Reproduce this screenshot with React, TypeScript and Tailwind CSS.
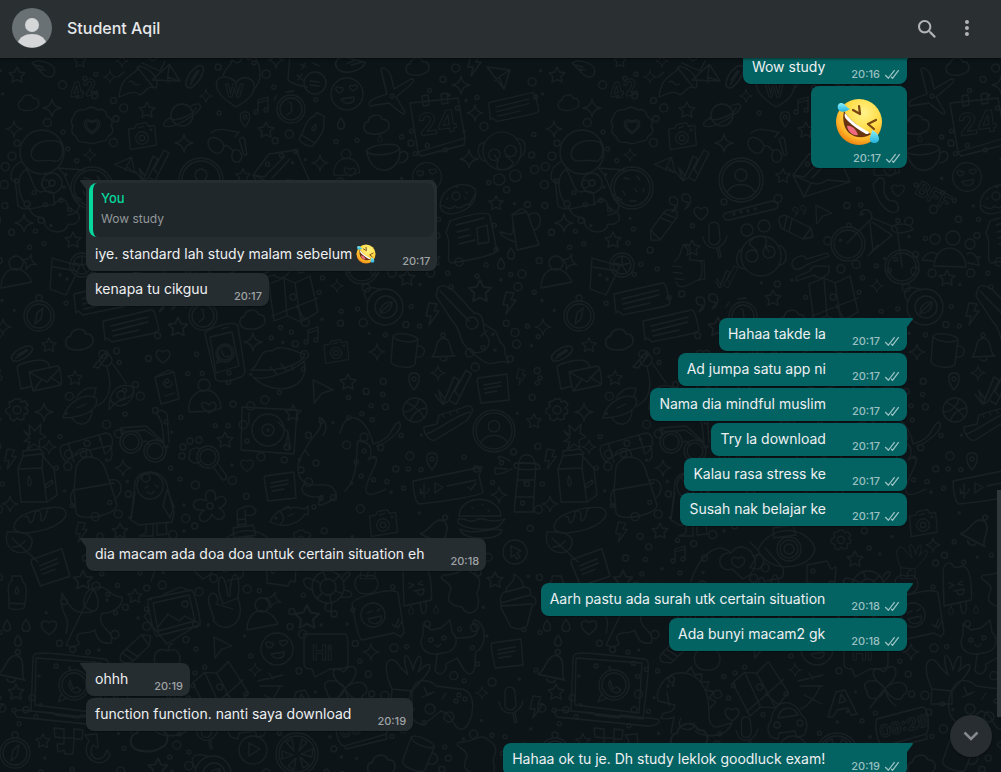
import { ReactNode } from "react";

type Message = {
  text?: string;
  time: string;
  emoji?: boolean;
  quote?: { author: string; text: string };
};

type Group = {
  mine: boolean;
  messages: Message[];
};

const groups: Group[] = [
  {
    mine: true,
    messages: [
      { text: "Wow study", time: "20:16" },
      { emoji: true, time: "20:17" },
    ],
  },
  {
    mine: false,
    messages: [
      {
        text: "iye. standard lah study malam sebelum",
        emoji: true,
        time: "20:17",
        quote: { author: "You", text: "Wow study" },
      },
      { text: "kenapa tu cikguu", time: "20:17" },
    ],
  },
  {
    mine: true,
    messages: [
      { text: "Hahaa takde la", time: "20:17" },
      { text: "Ad jumpa satu app ni", time: "20:17" },
      { text: "Nama dia mindful muslim", time: "20:17" },
      { text: "Try la download", time: "20:17" },
      { text: "Kalau rasa stress ke", time: "20:17" },
      { text: "Susah nak belajar ke", time: "20:17" },
    ],
  },
  {
    mine: false,
    messages: [{ text: "dia macam ada doa doa untuk certain situation eh", time: "20:18" }],
  },
  {
    mine: true,
    messages: [
      { text: "Aarh pastu ada surah utk certain situation", time: "20:18" },
      { text: "Ada bunyi macam2 gk", time: "20:18" },
    ],
  },
  {
    mine: false,
    messages: [
      { text: "ohhh", time: "20:19" },
      { text: "function function. nanti saya download", time: "20:19" },
    ],
  },
  {
    mine: true,
    messages: [{ text: "Hahaa ok tu je. Dh study leklok goodluck exam!", time: "20:19" }],
  },
];

// circle as a sub-path, so a doodle stays a single path string
const c = (x: number, y: number, r: number) =>
  `M${x - r} ${y}a${r} ${r} 0 1 0 ${r * 2} 0a${r} ${r} 0 1 0 ${-r * 2} 0`;

// doodle outlines, drawn around 0,0
const shapes: Record<string, string> = {
  star: "M0-8 2.4-3 8-2.2 4 1.6 5 7.2 0 4.6-5 7.2-4 1.6-8-2.2-2.4-3Z",
  sparkle: "M0-9Q1-1 9 0 1 1 0 9-1 1-9 0-1-1 0-9Z",
  heart: "M0 7C-12-1-6-9 0-4 6-9 12-1 0 7Z",
  cloud: "M-9 7C-14 4-12-3-8-3-7-10 3-11 5-5 12-6 13 4 7 6 3 9-5 9-9 7Z",
  pin: "M0 9C-8-1-6-8 0-8S8-1 0 9Z" + c(0, -2, 2),
  drop: "M0-6C6 2 3 5 0 5S-6 2 0-6Z",
  bolt: "M-3-11 5-10 2-3 7-3-3 11-1 2-6 2Z",
  capsule: "M-11-5C-5-10 8-5 11 0 14 9 6 11 1 7ZM-8-3 0-1M-5 1 2 2",
  clip: "M-9 5C-13 0 5-11 9-6S-7 11-9 5ZM-6 4 5-3M-4 1 4-4",
  cone: "M-11-10 12-7 6 12ZM6 12 1 0 12-7M1 0-3 4",
  cursor: "M-8-11 10-2 0 1-7 10Z",
  cursorCircle: c(0, 0, 12) + "M-4-6 6-1 2 1 5 5 2 7-1 3-4 5Z",
  music: "M-4 6V-6L6-9V3M-4-3 6-6" + c(-6, 6, 2) + c(4, 4, 2),
  unicorn: "M-19 17C-17-2-8-4-3-8L2-14C17-9 21 1 18 8 8 5 10 11 2 15-5 9-12 15-19 17ZM-1-13 16 8M-9 2C-4-2-5 8 1 4M4-17 22-9 27-19M-20-3-14-8",
  fireHeart: "M0 22C-26 6-22-8-12-8-6-8-2-5 0-2 4-9 14-9 18-2 21 9 8 18 0 22ZM-13-9C-12-17-6-16-4-25 1-21 4-20 7-30 12-25 14-22 17-31 27-17 26-3 17 5",
  saturn: c(0, 0, 11) + "M-11 2C-27 12-15 15 0 7S22-8 17-11C14-12 9-9 8-8M-12 4C-5 7 13-1 14-7",
  badge: "M-17-13C-12-19-7-15-6-17-1-21 5-17 6-16 12-18 15-13 15-10 21-7 21-2 19 0 24 6 17 10 16 10 15 17 8 15 6 16 0 20-5 16-7 16-14 18-16 11-16 10-22 8-20 2-19 0-23-5-19-8-17-13Z",
  camera: "M-15-10-8-11-6-15 5-17 7-13 14-14 16 8-13 13Z" + c(0, 0, 7) + c(0, 0, 3) + "M-4-11 2-13" + c(10, -9, 1),
  sunglasses: "M-21 0C-18-10-6-1-5 4-8 18-22 9-21 0ZM-5 4C0 2 2 7 4 9 8 4 17 13 10 20 0 21 3 11 4 9M-18-9C-9-17 4-9 10-10L6-5M10-2C18-11 15 4 18 12 13 16 15 8 10-2",
  watch: c(0, 0, 14) + c(0, 0, 11) + "M-2-7 0-6 1 2-4 6M-5-17 3-18M-14-14-17-9",
  calculator: "M-20-17-22 7C-21 12-8 14-3 15M-18-18 5-15M-10-8-4-5M-5-9-8-3M3-9 9-6M-13 3-7 8M-8 2-12 8" + c(5, 11, 11) + "M0 9 9 10M0 13 9 14",
  bottle: "M-5-15 4-15 6-9C12-5 8 13 7 17-1 20-6 18-8 17-7 3-12-4-5-11ZM-8 12 7 13M0-4C6 5-6 5 0-4",
  smiley: c(0, 0, 16) + "M-8-1C-15-6-9-9-7-6-3-8-2-3-8-1ZM6-3C0-7 3-10 6-8 10-11 13-6 6-3ZM-6 5 7 3C8 10-2 12-6 5Z",
  plane: "M-3 1-9-23C-8-27-3-25 1-17L4-4 21-14C28-14 22-9 6 4L15 19C15 23 12 21-1 10L-20 13C-24 8-15 5-3 1Z" + c(2, 3, 2),
  calendar: "M-26-19 22-24 29 16-18 30ZM-18 30-15 34 28 23 29 16M-14-26-8-27-7-17-13-16ZM5-28 11-29 12-19 6-18Z",
  chat: "M-26-6 22-17C25-18 26-15 30 3 29 7 10 9-17 15L-22 11-24 13ZM-18-1 19-10M-17 4 19-5M-16 9 10 3",
  smallChat: "M-15-10 14-14 16 12-12 15-16-7ZM-9-3 8-6M-9 1 8-2M-8 5 4 3",
  cup: "M-16-4C-15-10 12-14 14-7 18 12-9 25-16-4ZM-16-4C-10 1 11-1 14-7M15-3C24-8 24 7 14 6",
  person: c(0, -11, 7) + "M-15 14C-15-9 7-12 16 8Z",
  lover: c(0, -15, 6) + "M-15 11C-18-12 15-20 17 8L7 11-14 12ZM5 13C-8 4-1-1 5 5 10-2 18 7 5 13Z",
  monkey: c(0, 0, 20) + c(-8, 4, 6) + c(9, 0, 6) + c(-3, 30, 6) + c(14, 26, 6) + "M-19-9C-30-7-24 13-17 10M16-13C29-12 24 6 19 7M-8 4-4 10C-11 23 9 22 12 12L4 5",
  donut: "M-18 7C-16-13 8-18 17-9 23 13-17 25-18 7ZM-18 7C-8 10-9 13-3 8 3 14 8 3 11 7L18-5" + c(-2, -2, 4) + "M-11 1-10 0M8-6 9-5M-2-11 0-11M7 1 8 0",
  newspaper: "M-20-17C-8-21 17-29 20-22L27 13C20 20-10 23-18 25-26 25-17 4-24-5L-20-17M-14-13 14-20M-13-6-1-9M-12 0 0-3M-11 6 5 2M7-10 17-13 19 4 8 6Z",
  teapot: "M-13-17 2-20 14 13-8 18ZM-13-17C-9-22-6-20-5-23-2-24 0-21 2-20M4-17C18-26 18-3 9-2M-12-8C-10 9-18 0-25 0-22 7-14 8-10 10",
  astronaut: c(0, 0, 22) + "M-11 2C-10-9 3-14 18-10 24-1 18 12 13 9 1 6-9 14-11 2M-20 9C-37 17-30 35-27 27L-24 54C-15 62 2 51 12 53 12 42 14 37-2 40-10 37-9 26-16 17-28 26-22 44-18 50M-14 54C-8 70 1 62 3 69 0 79 23 86 26 72 36 75 46 62 26 56M26 56C25 42 15 48 12 53M16 16C26 24 25 34 32 45 42 55 35 62 26 63M16 16 42 18" + c(10, 31, 10) + c(10, 31, 3),
  cookie: c(0, 0, 21) + c(0, 0, 18) + "M-8-10-3-9M5-12 8-8M-9 3-7 7M3 1 5 4M-2 13 4 13M11 4 12 1M-18 7-10 12",
  avatar: c(0, 0, 22) + c(0, 0, 19) + c(0, -5, 6) + "M-14 12C-8 2 8 2 14 12",
  envelope: "M-28-13-12-34 15-38 29-6-17 9ZM-28-13-10-5-17 9M29-6 6-8C0-3-5-4-10-5M-17-11 4-32M-9-10 9-29M-17-11-28-13",
  letters: "M-13 6-24 9-28-13C-27-16-3-24 3-17L5-12M-16-8 12-14C16-14 17 3 16 5L-12 11ZM-16-8 2 2 15-12M-11 10-3-1M16 4 5-3",
  checks: "M-19 5-12 14-2-10M2 6-1 2 9-17 14-14 0 14-5 11M-12 14-7 11 3-8-2-11-10 9-16 1Z",
  password: "M-23 2 23-10C30-9 31-3 26-2L-20 9C-27 9-27 3-23 2Z" + c(-15, 3, 1) + c(-8, 1, 1) + c(-1, 0, 1) + c(6, -2, 1),
  quotes: "M-9-6C-1-8-2 6-9 9-4 2-5 2-8 2-14 0-12-6-9-6ZM4-9C12-10 11 4 4 6 9-1 8-1 5-1-1-3 0-9 4-9Z",
  mic: "M-5-14C-4-20 5-19 5-12L6 0C4 7-5 6-5 0ZM-11-3C-8 13 10 11 13-4M3 9 5 18 7 17 5 8",
  thumb: "M-13-6C-5-10-6-20-3-25 8-28 4-9 4-8L14-7C20-6 19 14 12 15L2 20C-6 24-10 21-11 17M14-7 20-7 21 13 13 15M-15-1-5 0M-14 6-4 7M-12 13-3 14",
  phone: "M-7-17C-1-18-1-11-2-7-3-1 1 5 5 6 11 4 15 14 10 17 1 20-11 4-13-11Z",
  bicycle: c(-27, 10, 17) + c(-27, 10, 14) + c(27, 33, 17) + c(27, 33, 14) + "M-28 9-3-16C-3-25-13-28-15-19L-11-20M-5-11-2 17M-3-12 17 1-2 17M-3-16 22-6 27 33M16-6C18-10 35-13 38-4 29-2 21 3 16-6M-7 22 3 11",
  pencil: "M-16-8C-17-14-10-14-8-13L16-1 18 8 8 10-14-1ZM-8-13-11 0M-3-10-6 3M16-1 8 10",
  sliders: "M-18 3C-20-4-5-10-4-3L17-9C21-6 17-5 16-5L-4 3C-11 9-16 9-18 3ZM-14 15 0 9C3 0 13 6 19 4 22 14 9 19 4 13L-14 19Z",
  map: "M-24-14-9-20 2-15 17-22 25 14 8 24-6 18-19 23ZM-9-20-6 18M2-15 8 24M-21 18 25 0M3 7 11 21" + c(0, -1, 3),
  group: c(3, -14, 7) + c(-15, -13, 5) + c(20, -8, 5) + "M-16 14C-14-12 15-8 16 15ZM-13 2C-22-4-28 8-28 8L-17 9M17 2C25-4 29 12 29 13L18 11",
  avocado: c(0, 0, 18) + c(1, 0, 11) + "M-5 6C-5-1 1-6 7-5 7 3 1 7-5 6ZM-5 6 7-5M-17-5C-29-23-8-20-4-17",
  guitar: "M-29-26C-24-32-17-25-14-24L7-1C18-1 16 12 18 20 27 26 21 42 5 38-11 27-4 17-14 8L-31-18ZM-27-23 2 7" + c(5, 9, 6) + "M14 22 20 17M18 10C28 20 26 9 33 28 43 37 33 33 42 49 31 44 26 54 16 47L4 38",
  drink: "M-13-17 15-9 1 20-15 14ZM-12-8 12-4" + c(17, -10, 12) + c(17, -10, 9) + "M17-10 17-19M17-10 25-12M17-10 22-2M17-10 9-12" + c(-5, 0, 1) + c(2, 4, 1),
  compass: c(0, 0, 15) + c(0, 0, 12) + "M4-8 2 3-4 8-2-3Z" + c(0, -18, 3),
  tablet: "M-20-20C-21-25 9-35 13-28L20 18C20 24-3 30-9 26ZM-15-17 7-22 14 12-9 19ZM-3-25 3-27" + c(0, -1, 9) + c(0, -1, 7) + "M-3-4C-3 2 0 4 4 2M-7 4-8 9-3 7" + c(4, 19, 2),
  lips: "M-27 3C-17-3-19-19-6-16 2-24 17-15 27-13 24-3 9 1-6 3ZM-25 10C-15 15 17 3 26-6 33 23-4 31-25 10M-8 0-1 7M3-3 8 3M13-2 15 3",
  scooter: "M-34 25C-31 10-13-1-1 5 2 14-7 24-34 25ZM-21 5C-12-9-3-4-1-5L-3 4M0 13C19 3 12-18 10-26M-4-26 10-42 12-39 1-25ZM16-29 29-10M12 17C12-13 35-10 37-3 35 9 22 2 12 17Z" + c(24, 2, 4) + "M13 5C16 17 34 15 37-1M-25 25C-20 34-6 34-5 18M-20 15-11 11" + c(9, -33, 6),
  gear: c(0, 0, 4) + "M-2-11 3-11 4-8 8-9 11-5 8-2 11 0 10 4 7 4 7 9 3 10 0 8-3 11-7 9-7 5-11 3-11-1-7-3-8-8-4-9Z",
  burst: "M-4-2-5-12 1-6 7-13 6-4 12 0 5 3 6 11 0 7-7 13-4 5-10 4-4 1-10-6Z",
  milk: "M-19-15-14-28 4-30 17-15 20 11 10 18-16 18ZM-14-28-14-33 3-35 7-30M-19-15 5-16 10 18M5-16 6-30M8 1 15-4 16-1 9 4ZM-8-8C-1 4-13 6-8-8",
  backpack: "M-14-15C-9-29 10-28 15-14L27 23C26 34-11 40-14 31L-16 8ZM-16 8 24 1M-17 8C-22 17-18 26-14 24M20-2C31-5 35 8 26 16M-24-20C-12-32 10-34 19-36 22-36 24-24 19-21M-24-20C-30-27-32-35-27-37L15-49C26-49 24-32 15-28M-15-28C-9-36 0-35 2-26M-22-39-16-20M9-47 15-28",
  glasses: c(-13, 7, 11) + c(-13, 7, 8) + c(11, 16, 11) + c(11, 16, 8) + "M-22 0-24-7 2-9 20 7M-1 7C3 4 5 9 6 11M-24-7-18-3 1-5 18 7M25 8 23-21C20-25 15-26 12-22 16-18 19-14 20 12",
  passport: "M-11-10 8-15 13 12-5 17ZM-11-10 3-17 8-15M-3-5C-1 3 7 1 6-5M-1 9 8 6" + c(1, -6, 2),
  magnifier: c(0, 0, 11) + c(0, 0, 8) + "M6 11 13 21C16 25 20 22 18 18L11 8M-8 5C-13 8-22 4-18-3-20-9-11-10-8-8" + c(-26, -1, 3) + c(-25, -10, 3) + c(-18, -16, 3) + c(-9, -17, 3),
  turntable: "M-26-23 29-20 26 24-27 20ZM-19-17-19-6" + c(0, 0, 16) + c(0, 0, 6) + c(0, 0, 1) + "M10-8 20 2 18 16M20 2 22 16" + c(19, 17, 3) + c(-21, 11, 2),
  fish: "M-18 4C-13-9 2-13 17-9L20-12 20-3 17-4C11 6-4 11-18 4ZM-8-6C-2-1-5 4-8 7M-5-9 0-12 3-9M0-2 5-4" + c(-12, 0, 1),
  flower: c(0, 0, 3) + "M-3-5C-10-17 9-21 5-6 14-16 22-2 9 2 22 9 8 20 2 8-3 22-18 14-6 4-21 7-20-12-3-5Z",
  hoodie: "M-22 18-18-20C-13-35 10-33 14-17L21 11 19 20-14 23ZM-18-10-22 18M14-12 21 5 17 16 10 4Z" + c(-3, -16, 13) + "M-8-14-5-16M2-17 5-15M-6-10C-2-7 0-8 1-11M-7 24-7 31-14 34 0 34 0 23M4 23 4 33 14 32 13 21",
  bread: "M-26 7C-25-9 11-14 22-12 34-5 18 10-13 13-21 13-26 12-26 7ZM-15-3C-10-6-12 2-10 3-3 1-8-11-1-9 3-7-1 1 2 1 9-3 4-12 10-12",
  leaf: "M-11-13C9-14 20-8 11 5 1 12-15 5-11-13ZM-6-7 20 17M2 1 7-4M2 1-5 2",
  snorkel: "M-8-14-7 2M0-15 1 2M-8-14C-2-19 8-22 11-14 9-8 4-10 1-10M-12 3 8 0 11 10-11 13ZM-8-5 0-6M-8 0 0-1",
  octopus: "M-2-25C5-34-2-43-6-42 0-29-12-28-20-10-30 4-30 20-16 24-5 27 5 21 10 31 15 38 3 42-3 45-14 47 5 30-6 37-15 38-28 34-21 24M-20-10-16-4M20 31C36 14 30-13 33-19 50-18 47-4 43 0 53-7 54-2 47 12 37 32 38 41 61 29M15-27C23-58 45-36 48-16M48-16C70-22 66-36 74-38 81-31 60-16 52-14" + c(-9, 3, 3) + c(-24, 10, 3),
  mug: "M-13-14C-8-19 9-15 12-11L9 14C7 19-12 18-15 12ZM-13-14C-10-8 8-6 12-11M11-4C21-6 21 9 10 7",
  bell: "M-11 10C-5 4-9-7 0-9 9-8 6 3 11 9ZM-11 10 12 9M-3 12C-1 15 4 14 4 11" + c(0, -12, 2),
  basketball: c(0, 0, 12) + "M-9-8C0-4 7 3 9 8M-11 2C-3 2 3-6 4-11M-5 11C-2 3 5-2 12-2",
  shoe: "M-24-1-11-4-9-13 14-20C26-26 28-18 18-7L-13 12C-18 14-25 5-24-1ZM-22 6C-12 4 7-13 22-16M-6-14-4-11M1-16 3-13M8-18 10-15",
  voice: "M-35-3 34-17 31-8 35 8C35 12-18 19-29 20-33 19-35 4-35-3ZM-24 0-24 7M-28 5C-26 11-20 11-19 5M-24 10-24 14M-13-1-13 9-5 3ZM-1 2 28-4M20 3 23 6 28-1",
  lighthouse: "M-8-14-13 35 6 35 9-14ZM-8-14C-7-25 6-25 8-14M-12-14C-15-9-12-6 13-8 14-14 9-14-12-14M-9 3 7 3M-11 20 6 20M-2 9-3 5 2 5 2 9ZM-15-8C-36 2-32-5-32-9L-20-8M-17-16C-34-26-29-17-24-16",
  burger: "M-21-1C-20-24 20-22 21-1ZM-22 3C-16-2-12 8-4 3 3-2 8 8 25 2L20 8C14 16-25 12-22 3M-20 12C-6 19 10 10 22 13 21 24-17 25-20 12M-8-10-7-9M2-13 3-12M8-7 9-6",
  dog: "M-24 18C-18-2-32 1-28-22M-28-22C-19-6-16 0 2-3M-3-7C-11-10-3-28 3-26 11-15 10 3-3-7ZM3-26C16-34 21-16 32-18 34-5 14 0 12-2 5 13 27 16 21 28 9 30 6 20 5 15-5 21-14 14-13 25-6 31-19 33-24 30Z" + c(17, -15, 1),
  picture: "M-25-12 18-21C22-21 28 12 27 14L-16 25C-20 25-26-11-25-12ZM-20-8 16-16 22 10-15 20ZM-15 16-5 3 6 10 12 5 22 10" + c(12, -7, 3) + "M-23 0-29 5-6 33 21 16M-9-17 8-24 17-20",
  peace: "M-14-8C-22-2-8 17-12 18-3 32 18 25 15 4L13-4C17-33 5-36 5-6L3-6C-1-36-10-26-5-6M-14-8C-10-12-4-1-9 2L8 7M-5-6-2 2 13-4",
  turtle: c(0, 0, 16) + c(0, 0, 8) + "M-8-4-15-8M-2-8-5-16M6-6 12-12M8 4 15 7M2 8 3 16M-6 6-11 12M14-9C20-20 28-15 15-5M-15-7C-29-14-26 2-15 3M16 3C29 5 25 12 13 10M4 16 3 24C-5 26-4 18 0 16",
  video: "M-14-12 6-16 10-8 15-10 14 5 9 4 7 9-14 6Z" + c(-8, -6, 2),
  emojiChat: "M-25-14C-27-20 17-32 21-25L27 14C26 18 24 16 24 19L17 15-15 22C-19 21-24-8-25-14Z" + c(-4, -3, 12) + "M-10-5-5-7M0-7 3-9M-9 1 4-2C7 6-6 9-9 1M15 6 18 9 22 1M19 8 21 10 25 3",
  ice: "M-15-16C-15-29-6-29-5-24-1-20 3-26 7-23 14-19 14 8 13 10L-14 16ZM2 13 4 23C7 25 9 22 8 11M-9-7-4-5-9-2M4-9 0-6 5-5M-4 1 6-1C6 7 0 6-1 1",
  blob: "M-18-18C-3-18 3-28 10-20 22-14 17-6 15 0 21 22 4 24 0 14-19 12-13 2-11-4-11-12-27-14-18-18Z",
  cat: "M-22-15-22-26-14-20-4-22 5-30 7-18C15-10 11 2-2 3-23 8-27-7-22-15ZM10-12C26-12 36-13 31-24 26-27 28-33 34-28 44-17 38-2 31 2 28 13 33 18 26 24 19 24 17 15 12 8M-8 5-10 21C-3 28 2 20 1 14L12 8" + c(-14, -10, 2) + c(-1, -12, 2) + "M-10-5-7-3-4-6",
  hi: "M-22-19 18-19C22-19 22-17 22 10 22 15 19 16 4 16L-11 24-14 16C-22 16-22 13-22 10Z",
  apple: "M0-6C-17-14-18 13-3 13 19 16 14-14 0-6ZM0-6C0-11 3-14 5-13",
  laptop: "M-36-34C-36-42-34-42 35-34 41-33 41-32 34 26L-38 18ZM-33-35 33-30 30 20-34 12ZM-38 18C-55 16-57 17-52 24L38 33C49 33 53 28 48 26L12 22 10 25-14 22-15 20Z" + c(5, -8, 15) + c(5, -8, 12) + "M-7 0-11 9-2 5M1-13C-3-6 6 5 12-3L8-6 4-4Z",
  dinosaur: "M-29 1C-33-12-18-34 5-25 27-13 20 17 23 22 27 32 36 24 45 23 40 37 20 39 8 31M-29 1-12 5C-14 17-24 8-26 18-19 20-15 18-13 17L-16 33M-20-8-18 5M0-28 4-33 8-25 15-26 14-18 22-18 19-10 27-8 22-2 29 2 23 8M-6 18C-14 32 10 33 7 23" + c(-19, -14, 1) + c(-14, -15, 1),
  translate: "M-29-14-4-20M-18-22-14-16M-27-9-4-9M-7-8C-12 2-19 11-26 14M-23 0-5 9M1 22 9-3 18-5 30 19 24 20 21 13 10 15 6 22ZM12 8 19 6 14-1Z",
  clover: "M0 0C-18-12-13-25-1-16 8-30 20-15 0 0M0 0C20-15 27 4 18 7 16 16 4 10 0 0M0 0C-2 13-19 14-18 3-27-8-8-12 0 0 2 10 5 14 11 18M0 0-15 20",
  car: "M-17 2C-14-22 7-21 14-3 22 0 18 16 15 17L9 18 7 12-9 14-10 20-17 18C-22 12-20 6-17 2ZM-10-1C-8-13 5-14 10-4Z" + c(-11, 6, 3) + c(12, 4, 3),
  clock: "M-25-9 20-21C27-21 28 2 24 6L-18 18C-25 17-28-3-25-9ZM-18 18-16 21 25 11 24 6",
  plant: "M-14 26-13 11C-26-16-14-27-5-11L3-3C-6-31 5-25 8-8 14-33 20-18 13-6 28-22 29-10 15 4L7 13 7 26ZM-13 11 7 13",
  gamepad: "M-31-19C-26-28-13-24-9-19L14-16C35-17 28 21 18 24 7 26 10 9-4 6L-22 20C-42 15-37-9-31-19ZM-21-18-18-11-11-13M-23-8-14-11M1-12-3-6" + c(14, -10, 2) + c(20, -6, 2) + c(11, -4, 2) + c(-15, 4, 5) + c(4, 12, 5),
  pixels: "M-14-14-4-13-4-4 6-4 6-13 15-12 14-3 6-3 5 12-3 12-4 8-10 10-11 2-4 2-4-4-13-5Z",
  refresh: "M-9-9C-20 8 5 22 12 5L9 0C5 16-13 8-5-5L0-2-1-16-13-15Z",
  play: c(0, 0, 14) + "M-4-7 7-1-4 6Z",
  citrus: c(0, 0, 21) + c(0, 0, 18) + "M2-3 5-15 10-12ZM4 0 16-5 15 3ZM3 3 12 11 6 14ZM-1 4-3 16-9 12ZM-4 1-15 5-15-3ZM-3-3-11-12-5-15Z",
  cupcake: "M-17 3C-19-4-14-9-12-8-13-17-3-14-4-26 6-20 5-14 6-13 14-13 13-6 12-5 22-1 17 6 14 6L9 26C3 30-3 29-7 27L-17 8ZM-16 6 14 4M-12-8 6-13M-17 3 12-5",
  heartHands: "M-47 23C-42 7-25-21-7-5-23-7-21 16-6 11L5 21C17 16 20 3 15-3M-7-5C1-17 15-8 15-2 31-10 28 19 12 9M0 10C-14 2-2-4 0 1 4-5 13 4 0 10ZM27-10 45 10C48 25 37 19 29 23",
  eye: "M-28 0C-18-24 18-27 29-2 27 20-18 25-28 0ZM-28 0-36-8M-28 4-36 18" + c(3, -1, 12) + c(3, -1, 9) + c(3, -1, 5),
};

type Doodle = [kind: string, x: number, y: number, scale?: number, rotate?: number];

const doodles: Doodle[] = [
  ["star", 17, 75], ["capsule", 43, 68], ["sparkle", 110, 77, 0.7], ["unicorn", 138, 80], ["cone", 167, 78, 1, -50],
  ["clip", 195, 77, 1.2, -25], ["fireHeart", 236, 85], ["calculator", 310, 72], ["cloud", 418, 67], ["bolt", 474, 65],
  ["cone", 498, 77], ["star", 80, 61, 0.8], ["sparkle", 122, 61, 0.7], ["sparkle", 276, 60, 0.9], ["capsule", 351, 64, 1.2, 150],
  ["cloud", 29, 103, 0.9], ["sparkle", 52, 108], ["sparkle", 14, 129, 0.9], ["badge", 92, 126], ["heart", 92, 126, 1.1], ["heart", 92, 126, 0.8],
  ["star", 147, 110], ["saturn", 182, 115], ["sparkle", 206, 96, 0.7], ["camera", 142, 138, 0.9], ["sparkle", 184, 143],
  ["pin", 245, 119, 0.9], ["music", 262, 106], ["watch", 291, 109], ["bottle", 314, 128, 1, 28], ["star", 266, 130],
  ["sunglasses", 229, 142], ["smiley", 347, 94], ["plane", 390, 93], ["sparkle", 461, 85], ["calendar", 436, 122],
  ["sparkle", 475, 113, 0.9], ["chat", 512, 108, 0.9], ["cloud", 377, 125, 1.1], ["cup", 384, 156, 1.1], ["drop", 380, 139, 0.6],
  ["drop", 341, 124], ["lover", 346, 166, 0.8], ["monkey", 502, 151, 0.95], ["sparkle", 469, 159], ["astronaut", 42, 152],
  ["sparkle", 90, 155, 0.7], ["cone", 126, 167, 0.8, -30], ["checks", 155, 167], ["avatar", 201, 180], ["star", 243, 176, 0.9],
  ["envelope", 281, 188], ["sparkle", 320, 163, 0.9], ["cookie", 92, 188], ["heart", 358, 190, 0.9], ["phone", 346, 195],
  ["smiley", 427, 177, 0.9], ["donut", 458, 198], ["star", 496, 203, 0.9], ["quotes", 141, 203], ["heart", 161, 213],
  ["password", 209, 211], ["quotes", 260, 211, 0.6], ["cursor", 283, 215, 0.9], ["sparkle", 24, 223], ["star", 73, 240],
  ["pencil", 122, 224, 1, 100], ["star", 152, 248], ["mic", 174, 240], ["pencil", 255, 229], ["bicycle", 335, 234],
  ["newspaper", 470, 238], ["teapot", 525, 232], ["thumb", 146, 267, 0.9], ["monkey", 221, 256, 1, 180], ["sliders", 270, 262],
  ["group", 410, 252], ["star", 407, 278], ["drop", 501, 264], ["drop", 511, 254], ["person", 16, 274],
  ["drink", 65, 275], ["sparkle", 29, 262, 0.9, 20], ["checks", 188, 278, 0.7], ["star", 233, 298], ["map", 293, 298],
  ["sparkle", 337, 286, 0.7], ["compass", 39, 316], ["quotes", 168, 303], ["chat", 100, 300],
  ["chat", 129, 327], ["star", 178, 327, 1.2], ["watch", 203, 316], ["cloud", 253, 320, 1.1], ["avocado", 385, 307],
  ["bolt", 432, 314], ["guitar", 467, 314], ["star", 480, 291, 1.4], ["bolt", 509, 303],
  ["sparkle", 3, 327, 0.9], ["cloud", 80, 340, 1.2], ["star", 49, 345, 0.9], ["clip", 22, 354, 1.1], ["heart", 163, 356],
  ["tablet", 225, 354], ["sparkle", 253, 342], ["music", 312, 336], ["lips", 278, 367], ["camera", 336, 353, 0.8],
  ["sparkle", 377, 352, 0.9], ["mug", 406, 350], ["bell", 443, 347], ["letters", 45, 380], ["star", 75, 378, 0.9],
  ["scooter", 97, 393], ["passport", 166, 387], ["lover", 204, 400], ["cursor", 322, 392, 1.1], ["star", 348, 382],
  ["pin", 414, 381], ["sparkle", 438, 373, 0.8], ["checks", 456, 389, 1.1], ["smallChat", 493, 388], ["bolt", 521, 377, 0.7],
  ["gear", 17, 410], ["sparkle", 44, 412], ["burst", 34, 437], ["sparkle", 49, 447, 0.8], ["bolt", 10, 459, 0.9],
  ["turntable", 268, 430], ["star", 293, 413], ["star", 225, 440], ["glasses", 144, 435], ["magnifier", 208, 457],
  ["basketball", 415, 410], ["shoe", 448, 428], ["avatar", 494, 431, 0.95], ["star", 534, 421, 0.9], ["octopus", 325, 460],
  ["pin", 432, 461], ["voice", 448, 484], ["lighthouse", 527, 477], ["sparkle", 499, 495, 0.9], ["heart", 247, 465, 0.9],
  ["milk", 37, 484], ["backpack", 90, 482], ["sparkle", 123, 468, 0.9], ["hoodie", 153, 502], ["smallChat", 280, 486],
  ["fish", 288, 518], ["flower", 210, 506], ["sparkle", 10, 504, 0.9], ["bread", 40, 520], ["bolt", 81, 532, 0.9],
  ["star", 120, 531], ["snorkel", 245, 525], ["camera", 383, 525, 0.9], ["burger", 480, 517], ["bell", 438, 530, 1.2, 30],
  ["leaf", 18, 545], ["smallChat", 50, 567, 1.1, -12], ["music", 139, 555], ["star", 83, 580, 1.2], ["heartHands", 198, 558],
  ["cursorCircle", 515, 552], ["eye", 246, 550], ["gear", 301, 540, 0.9], ["star", 315, 559], ["plant", 370, 560, 0.7],
  ["sparkle", 393, 545, 0.8], ["bottle", 17, 591], ["dog", 90, 615], ["star", 135, 596, 0.9], ["picture", 173, 611],
  ["peace", 225, 602], ["person", 262, 616], ["sparkle", 273, 600, 0.9, 15], ["video", 281, 577], ["turtle", 328, 587],
  ["star", 307, 617, 1.5], ["apple", 367, 582, 0.9], ["ice", 418, 590], ["blob", 462, 593], ["star", 495, 580],
  ["cupcake", 518, 600], ["emojiChat", 377, 618], ["drop", 7, 626], ["drop", 26, 626, 1.1], ["drop", 18, 641],
  ["heart", 49, 627, 1.1], ["drop", 411, 611, 0.7], ["drop", 436, 610, 0.7], ["cat", 445, 650], ["smiley", 277, 649],
  ["hi", 326, 653], ["pencil", 137, 650, 1, -70], ["apple", 168, 657], ["cursor", 222, 648], ["sparkle", 371, 652, 0.9],
  ["smallChat", 507, 653], ["bell", 14, 666, 1.2, 15], ["laptop", 69, 693], ["star", 16, 692], ["sparkle", 255, 670, 0.7],
  ["dinosaur", 147, 700], ["map", 220, 688, 1, -20], ["translate", 287, 695], ["clover", 345, 688], ["plant", 405, 678],
  ["gamepad", 445, 705], ["sparkle", 482, 693, 0.7], ["mic", 510, 705], ["bolt", 536, 707], ["heart", 192, 714],
  ["car", 248, 719], ["clock", 362, 728], ["compass", 15, 753], ["star", 43, 741, 0.9], ["pixels", 68, 742],
  ["refresh", 98, 750], ["cloud", 150, 738, 1.6], ["mic", 206, 733, 0.9], ["play", 253, 750], ["citrus", 297, 754],
  ["star", 158, 768, 1.2], ["avocado", 213, 774], ["mug", 420, 754, 1, 15], ["blob", 478, 760], ["cloud", 382, 766, 1.2],
];

const sketchedWords = [
  { word: "42", x: 71, y: 100, size: 22, rotate: -14 },
  { word: "W", x: 225, y: 97, size: 18, rotate: 0 },
  { word: "24", x: 420, y: 136, size: 30, rotate: -8 },
  { word: "BFF", x: 374, y: 193, size: 20, rotate: 28 },
  { word: "Hi", x: 312, y: 660, size: 20, rotate: 0 },
  { word: "09:28", x: 341, y: 738, size: 17, rotate: -14 },
];

// small bubbles that fill the space between the doodles
function scatterDots() {
  const dots: { x: number; y: number; r: number }[] = [];
  let seed = 11;
  const next = () => {
    seed = (seed * 16807) % 2147483647;
    return seed / 2147483647;
  };
  const small = ["star", "sparkle", "heart", "drop", "bolt", "pin", "music"];
  for (let i = 0; i < 3600; i++) {
    const dot = { x: next() * 540, y: 56 + next() * 720, r: [1, 2, 2, 3, 4][Math.floor(next() * 5)] };
    const nearDoodle = doodles.some(([kind, x, y]) => {
      const reach = small.includes(kind) ? 14 : 25;
      return Math.hypot(x - dot.x, y - dot.y) < reach;
    });
    const nearDot = dots.some((d) => Math.hypot(d.x - dot.x, d.y - dot.y) < 11);
    if (!nearDoodle && !nearDot) dots.push(dot);
  }
  return dots;
}

const dots = scatterDots();

function Wallpaper() {
  return (
    <svg className="absolute inset-0 h-full w-full" aria-hidden="true">
      <defs>
        <g id="doodles" fill="none" stroke="#182024" strokeWidth="1.3" strokeLinejoin="round" strokeLinecap="round">
          {doodles.map(([kind, x, y, scale = 1, rotate = 0], i) => (
            <path key={i} d={shapes[kind]} transform={`translate(${x} ${y}) rotate(${rotate}) scale(${scale})`} />
          ))}
          {dots.map((d, i) => (
            <circle key={i} cx={d.x} cy={d.y} r={d.r} />
          ))}
          {sketchedWords.map(({ word, x, y, size, rotate }) => (
            <text
              key={word}
              fontFamily="Inter, sans-serif"
              fontWeight="700"
              fontSize={size}
              strokeWidth="1"
              transform={`translate(${x} ${y}) rotate(${rotate})`}
            >
              {word}
            </text>
          ))}
        </g>
        <pattern id="wallpaper" width="540" height="800" patternUnits="userSpaceOnUse" patternTransform="translate(0 -58)">
          <use href="#doodles" />
          <use href="#doodles" x="540" />
          <use href="#doodles" x="-540" />
        </pattern>
      </defs>
      <rect width="100%" height="100%" fill="url(#wallpaper)" />
    </svg>
  );
}

function LaughingEmoji({ className }: { className: string }) {
  return (
    <svg viewBox="0 0 48 48" className={className} role="img" aria-label="Rolling on the floor laughing">
      <defs>
        <radialGradient id="face" cx="0.6" cy="0.3" r="0.72">
          <stop offset="0" stopColor="#fff38c" />
          <stop offset="0.5" stopColor="#ffdd48" />
          <stop offset="0.8" stopColor="#fdb52a" />
          <stop offset="1" stopColor="#f08410" />
        </radialGradient>
        <linearGradient id="tear" x1="0" y1="0" x2="0" y2="1">
          <stop offset="0" stopColor="#8af0fb" />
          <stop offset="1" stopColor="#22b2dd" />
        </linearGradient>
      </defs>
      <circle cx="24" cy="24" r="23" fill="url(#face)" />
      <path d="M9 13C7 22 9 30 14 35C20 40 29 41 36 36C28 32 15 23 9 13Z" fill="#693410" />
      <path d="M10 15C9 18 10 20 12 22C18 28 24 32 31 36C33 36 34 36 34 34C26 30 17 24 10 15Z" fill="#fff" />
      <path d="M12 28C16 27 21 31 23 37C18 38 13 34 12 28Z" fill="#ee6a80" />
      <path
        d="M18 12L25 16L24 8M41 22L33 26L39 31"
        fill="none"
        stroke="#7a4510"
        strokeWidth="2.2"
        strokeLinecap="round"
        strokeLinejoin="round"
      />
      <path d="M15 11C11 14 5 15 3 11C2 7 4 5 6 5C10 5 12 10 15 11Z" fill="url(#tear)" />
      <path d="M37 32C41 34 44 37 44 41C44 45 39 46 36 44C33 41 37 36 37 32Z" fill="url(#tear)" />
    </svg>
  );
}

function DoubleCheck() {
  return (
    <svg viewBox="0 0 16 15" width="16" height="15" className="ml-1" fill="currentColor" aria-hidden="true">
      <path d="M15.01 3.316l-.478-.372a.365.365 0 0 0-.51.063L8.666 9.879a.32.32 0 0 1-.484.033l-.358-.325a.319.319 0 0 0-.484.032l-.378.483a.418.418 0 0 0 .036.541l1.32 1.266c.143.14.361.125.484-.033l6.272-8.048a.366.366 0 0 0-.064-.512zm-4.1 0l-.478-.372a.365.365 0 0 0-.51.063L4.566 9.879a.32.32 0 0 1-.484.033L1.891 7.769a.366.366 0 0 0-.515.006l-.423.433a.364.364 0 0 0 .006.514l3.258 3.185c.143.14.361.125.484-.033l6.272-8.048a.365.365 0 0 0-.063-.51z" />
    </svg>
  );
}

function Tail({ mine }: { mine: boolean }) {
  return mine ? (
    <svg className="absolute top-0 left-full text-[#036363]" width="6" height="10" aria-hidden="true">
      <path d="M0 0H5Q6 0 6 1L0 9Z" fill="currentColor" />
    </svg>
  ) : (
    <svg className="absolute top-0 right-full text-[#262d31]" width="6" height="10" aria-hidden="true">
      <path d="M6 0H1Q0 0 0 1L6 9Z" fill="currentColor" />
    </svg>
  );
}

function Meta({ time, mine, className }: { time: string; mine: boolean; className: string }) {
  return (
    <span
      className={`flex items-center text-[11px] leading-[15px] font-medium ${mine ? "text-[#9bc0c1]" : "text-[#a0a4a6]"} ${className}`}
    >
      <time>{time}</time>
      {mine && <DoubleCheck />}
    </span>
  );
}

function Bubble({ message, mine, first }: { message: Message; mine: boolean; first: boolean }) {
  const corner = first ? (mine ? "rounded-tr-none" : "rounded-tl-none") : "";
  let body: ReactNode;

  if (!message.text) {
    body = (
      <div className="flex flex-col px-6 pt-3">
        <LaughingEmoji className="h-12 w-12" />
        <Meta time={message.time} mine={mine} className="-mr-[18px] mt-[5px] mb-[2px] justify-end" />
      </div>
    );
  } else {
    body = (
      <>
        {message.quote && (
          <div className="px-[3px] pt-[3px] pb-px">
            <blockquote className="flex h-[54px] flex-col gap-[3px] rounded-lg border-l-4 border-[#06d79c] bg-[#20272a] pt-[6px] pl-2">
              <span className="text-[13px] leading-[18px] font-medium text-[#06d79c]">{message.quote.author}</span>
              <span className="text-[12px] leading-[18px] text-[#92979a]">{message.quote.text}</span>
            </blockquote>
          </div>
        )}
        <div className="flex pr-[7px] pl-[9px]">
          <p className="flex items-center pt-[6px] pb-2 text-[14px] leading-[19px] text-[#eef0f1]">
            {message.text}
            {message.emoji && <LaughingEmoji className="-my-1 ml-1 h-5 w-5" />}
          </p>
          <Meta time={message.time} mine={mine} className="mb-[2px] ml-[26px] self-end" />
        </div>
      </>
    );
  }

  return (
    <li
      className={`relative rounded-lg shadow-[0_1px_1px_rgba(0,0,0,0.3)] ${mine ? "bg-[#036363]" : "bg-[#262d31]"} ${corner}`}
    >
      {first && <Tail mine={mine} />}
      {body}
    </li>
  );
}

function Header() {
  return (
    <header className="relative z-10 flex h-[58px] shrink-0 items-center bg-[#2a2f32] pr-[22px] pl-3 shadow-[0_1px_3px_rgba(0,0,0,0.5)]">
      <div className="flex flex-1 items-center pb-[2px]">
        <svg viewBox="0 0 40 40" className="h-10 w-10" role="img" aria-label="Profile photo">
          <clipPath id="avatar">
            <circle cx="20" cy="20" r="20" />
          </clipPath>
          <g clipPath="url(#avatar)">
            <rect width="40" height="40" fill="#6a7175" />
            <circle cx="20" cy="17" r="7" fill="#d4d6d8" />
            <path d="M6 34C8 29 13 26 20 26S32 29 34 34A20 20 0 0 1 6 34Z" fill="#d4d6d8" />
          </g>
        </svg>
        <h1 className="ml-[15px] text-[16px] leading-5 font-medium text-[#e6e8e9]">Student Aqil</h1>
      </div>
      <div className="flex items-center gap-4 text-[#b1b3b5]">
        <button type="button" aria-label="Search">
          <svg viewBox="0 0 24 24" width="24" height="24" fill="currentColor">
            <path d="M15.9 14.3H15l-.3-.3c1-1.1 1.6-2.7 1.6-4.3 0-3.7-3-6.7-6.7-6.7S3 6 3 9.7s3 6.7 6.7 6.7c1.6 0 3.2-.6 4.3-1.6l.3.3v.8l5.1 5.1 1.5-1.5-5-5.2zm-6.2 0c-2.6 0-4.6-2.1-4.6-4.6s2.1-4.6 4.6-4.6 4.6 2.1 4.6 4.6-2 4.6-4.6 4.6z" />
          </svg>
        </button>
        <button type="button" aria-label="Menu">
          <svg viewBox="0 0 24 24" width="24" height="24" fill="currentColor">
            <path d="M12 7a2 2 0 1 0-.001-4.001A2 2 0 0 0 12 7zm0 2a2 2 0 1 0-.001 3.999A2 2 0 0 0 12 9zm0 6a2 2 0 1 0-.001 3.999A2 2 0 0 0 12 15z" />
          </svg>
        </button>
      </div>
    </header>
  );
}

export default function App() {
  return (
    <div className="flex h-screen flex-col overflow-hidden bg-[#0d1418] font-['Inter','Liberation_Sans',sans-serif]">
      <Header />
      <main className="relative min-h-0 flex-1 overflow-hidden">
        <Wallpaper />
        <div className="relative -mt-[7px] flex flex-col gap-3 pr-[94px] pl-[86px]">
          {groups.map((group, i) => (
            <ul key={i} className={`flex flex-col gap-[2px] ${group.mine ? "items-end" : "items-start"}`}>
              {group.messages.map((message, j) => (
                <Bubble key={j} message={message} mine={group.mine} first={j === 0} />
              ))}
            </ul>
          ))}
        </div>
        <div className="absolute right-0 bottom-[55px] h-[227px] w-1 bg-[#30373a]" />
        <button
          type="button"
          aria-label="Scroll to bottom"
          className="absolute right-[9px] bottom-[15px] flex h-[42px] w-[42px] items-center justify-center rounded-full bg-[#272d31] text-[#85898c] shadow-[0_1px_2px_rgba(0,0,0,0.4)]"
        >
          <svg width="16" height="10" viewBox="0 0 16 10" fill="none" stroke="currentColor" strokeWidth="2.5">
            <path d="M1.5 1.5 8 8l6.500-6.500" />
          </svg>
        </button>
      </main>
    </div>
  );
}
